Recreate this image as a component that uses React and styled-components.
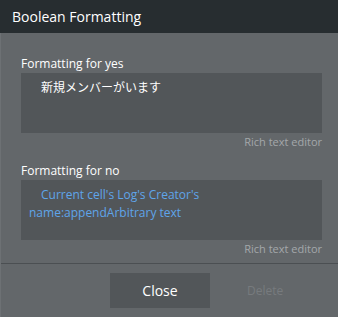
import React from "react";
import styled, { createGlobalStyle } from "styled-components";

const GlobalStyle = createGlobalStyle`
  html, body {
    margin: 0;
    padding: 0;
    background: #63676a;
  }
  body {
    font-family: "Open Sans", "Noto Sans CJK JP", sans-serif;
  }
`;

const Dialog = styled.div`
  width: 338px;
  height: 317px;
  background: #63676a;
  display: flex;
  flex-direction: column;
  border-left: 1px solid #6d7174;
  box-sizing: border-box;
`;

const Header = styled.div`
  height: 33px;
  flex-shrink: 0;
  background: #272d30;
  color: #ffffff;
  font-size: 14px;
  display: flex;
  align-items: center;
  padding-left: 12px;
  margin-left: -1px;
`;

const Body = styled.div`
  padding: 22px 16px 0 20px;
  display: flex;
  flex-direction: column;
  gap: 12px;
`;

const Field = styled.div`
  display: flex;
  flex-direction: column;
`;

const Label = styled.div`
  color: #ffffff;
  font-size: 12px;
  line-height: 18px;
`;

const Editor = styled.div`
  height: 60px;
  background: #525659;
  box-sizing: border-box;
  padding: 6px 8px 5px;
  font-size: 12px;
  line-height: 18px;
  color: ${(props) => (props.dynamic ? "#5fa5ea" : "#ffffff")};
  text-indent: 12px;
`;

const Hint = styled.div`
  align-self: flex-end;
  margin-top: 1px;
  color: #a3a7aa;
  font-size: 11px;
  line-height: 16px;
`;

const Footer = styled.div`
  margin-top: auto;
  flex-shrink: 0;
  border-top: 1px solid #4b4f52;
  height: 53px;
  display: flex;
  align-items: center;
  padding-left: 109px;
`;

const CloseButton = styled.button`
  width: 100px;
  height: 35px;
  border: none;
  background: #525659;
  color: #ffffff;
  font-family: "Open Sans", sans-serif;
  font-size: 14px;
  padding: 0;
  cursor: pointer;
`;

const DeleteButton = styled.span`
  margin-left: 37px;
  color: #777b7e;
  font-size: 12px;
`;

export default function App() {
  return (
    <>
      <GlobalStyle />
      <Dialog>
        <Header>Boolean Formatting</Header>
        <Body>
          <Field>
            <Label>Formatting for yes</Label>
            <Editor>新規メンバーがいます</Editor>
            <Hint>Rich text editor</Hint>
          </Field>
          <Field>
            <Label>Formatting for no</Label>
            <Editor dynamic>Current cell's Log's Creator's name:appendArbitrary text</Editor>
            <Hint>Rich text editor</Hint>
          </Field>
        </Body>
        <Footer>
          <CloseButton>Close</CloseButton>
          <DeleteButton>Delete</DeleteButton>
        </Footer>
      </Dialog>
    </>
  );
}
